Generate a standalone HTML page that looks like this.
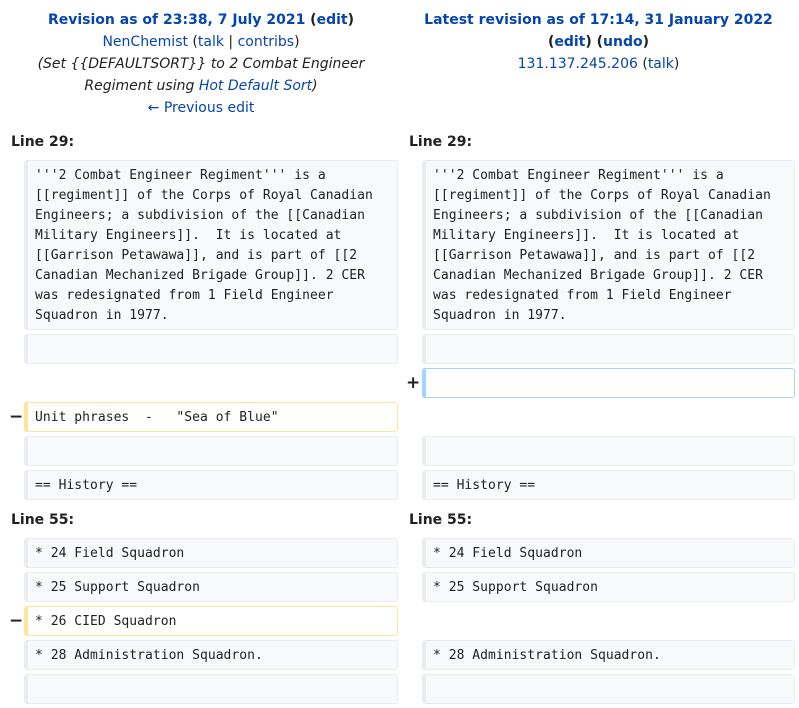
<!DOCTYPE html>
<html><head><meta charset="utf-8"><style>
body{margin:0;background:#fff;font-family:"DejaVu Sans",sans-serif;color:#202122;width:799px;height:708px;overflow:hidden;position:relative}
a{color:#0645ad;text-decoration:none}
.hdr{position:absolute;top:9px;text-align:center;font-size:14px;line-height:22px}
.b{font-weight:bold}
.ln{position:absolute;font-weight:bold;font-size:14px;line-height:20px}
.box{position:absolute;box-sizing:border-box;background:#f8f9fa;border:1px solid #eaecf0;border-left:4px solid #eaecf0;border-radius:3px;padding:5px 0 4px 7px;font-family:"DejaVu Sans Mono",monospace;font-size:13px;letter-spacing:0.03px;line-height:20px;white-space:pre;color:#202122}
.L{left:24px;width:374px}.R{left:422px;width:373px}
.del{background:#fff;border-color:#ffe49c}
.add{background:#fff;border-color:#a3d3ff}
.sg{position:absolute;font-weight:bold;font-size:17px;line-height:20px}
</style></head><body>
<div class="hdr" style="left:0;width:402px">
<div class="b"><a>Revision as of 23:38, 7 July 2021</a> (<a>edit</a>)</div>
<div><a>NenChemist</a> (<a>talk</a> | <a>contribs</a>)</div>
<div style="font-style:italic">(Set {{DEFAULTSORT}} to 2 Combat Engineer<br>Regiment using <a>Hot Default Sort</a>)</div>
<div><a>← Previous edit</a></div>
</div>
<div class="hdr" style="left:398px;width:401px">
<div class="b"><a>Latest revision as of 17:14, 31 January 2022</a></div>
<div class="b">(<a>edit</a>) (<a>undo</a>)</div>
<div><a>131.137.245.206</a> (<a>talk</a>)</div>
</div>
<div class="ln" style="left:11px;top:132px">Line 29:</div>
<div class="ln" style="left:409px;top:132px">Line 29:</div>
<div class="box L" style="top:160px;height:170px">'''2 Combat Engineer Regiment''' is a
[[regiment]] of the Corps of Royal Canadian
Engineers; a subdivision of the [[Canadian
Military Engineers]].  It is located at
[[Garrison Petawawa]], and is part of [[2
Canadian Mechanized Brigade Group]]. 2 CER
was redesignated from 1 Field Engineer
Squadron in 1977.</div>
<div class="box R" style="top:160px;height:170px">'''2 Combat Engineer Regiment''' is a
[[regiment]] of the Corps of Royal Canadian
Engineers; a subdivision of the [[Canadian
Military Engineers]].  It is located at
[[Garrison Petawawa]], and is part of [[2
Canadian Mechanized Brigade Group]]. 2 CER
was redesignated from 1 Field Engineer
Squadron in 1977.</div>
<div class="box L" style="top:334px;height:30px"></div>
<div class="box R" style="top:334px;height:30px"></div>
<div class="sg" style="left:406px;top:373px">+</div>
<div class="box R add" style="top:368px;height:30px"></div>
<div class="sg" style="left:9px;top:407px">−</div>
<div class="box L del" style="top:402px;height:30px">Unit phrases  -   "Sea of Blue"</div>
<div class="box L" style="top:436px;height:30px"></div>
<div class="box R" style="top:436px;height:30px"></div>
<div class="box L" style="top:470px;height:30px">== History ==</div>
<div class="box R" style="top:470px;height:30px">== History ==</div>
<div class="ln" style="left:11px;top:510px">Line 55:</div>
<div class="ln" style="left:409px;top:510px">Line 55:</div>
<div class="box L" style="top:538px;height:30px">* 24 Field Squadron</div>
<div class="box R" style="top:538px;height:30px">* 24 Field Squadron</div>
<div class="box L" style="top:572px;height:30px">* 25 Support Squadron</div>
<div class="box R" style="top:572px;height:30px">* 25 Support Squadron</div>
<div class="sg" style="left:9px;top:611px">−</div>
<div class="box L del" style="top:606px;height:30px">* 26 CIED Squadron</div>
<div class="box L" style="top:640px;height:30px">* 28 Administration Squadron.</div>
<div class="box R" style="top:640px;height:30px">* 28 Administration Squadron.</div>
<div class="box L" style="top:674px;height:30px"></div>
<div class="box R" style="top:674px;height:30px"></div>
</body></html>
